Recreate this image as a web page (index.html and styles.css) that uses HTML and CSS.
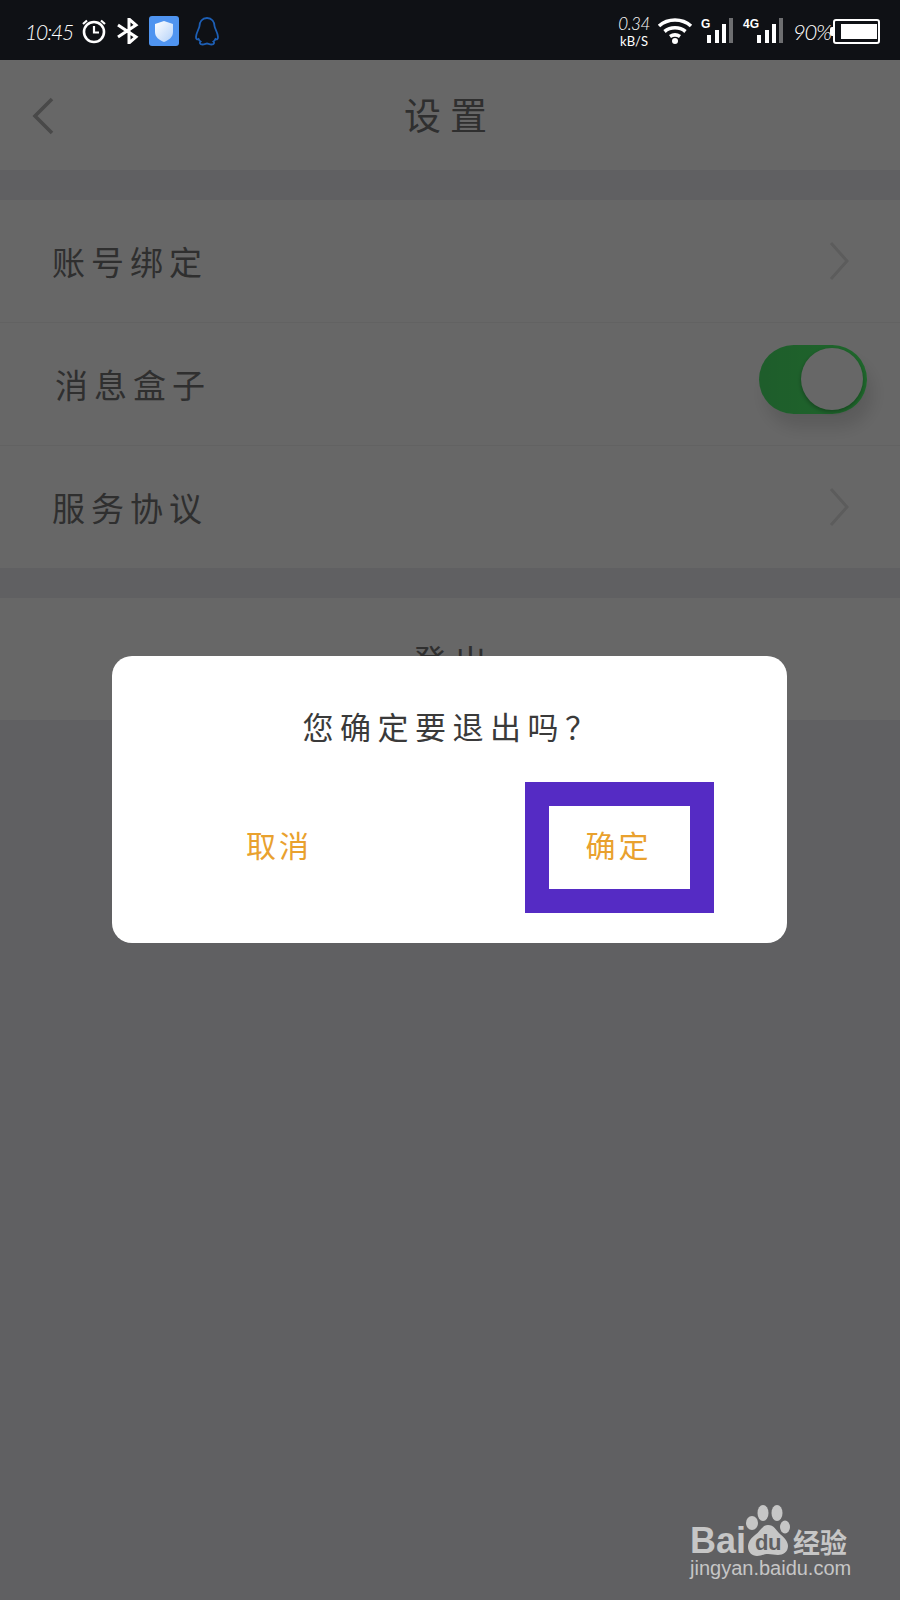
FILE: index.html
```html
<!DOCTYPE html>
<html lang="zh-CN">
<head>
<meta charset="utf-8">
<title>设置</title>
<link rel="stylesheet" href="styles.css">
</head>
<body>
<div class="phone">
  <div class="status">
    <div class="status-left">
      <span class="time">10:45</span>
      <svg class="ic-alarm" width="26" height="26" viewBox="0 0 26 26" fill="none" stroke="#fff" stroke-width="2.6"><circle cx="13" cy="14" r="10"/><path d="M13 8v6.500h5" stroke-width="2.200"/><path d="M2 6l4-3.500M24 6l-4-3.500" stroke-width="2.200"/></svg>
      <svg class="ic-bt" width="22" height="26" viewBox="0 0 22 26" fill="none" stroke="#fff" stroke-width="3"><path d="M1 7l18 12-7 6V1l7 6L1 19"/></svg>
      <svg class="ic-shield" width="30" height="30" viewBox="0 0 30 30"><defs><linearGradient id="sg" x1="0" y1="0" x2="1" y2="1"><stop offset="0" stop-color="#fff"/><stop offset="1" stop-color="#b4d2fa"/></linearGradient></defs><rect width="30" height="30" rx="3" fill="#4f94f0"/><path d="M15 5l9 3v8c0 5-4 8-9 10-5-2-9-5-9-10V8z" fill="url(#sg)"/></svg>
      <svg class="ic-qq" width="26" height="30" viewBox="0 0 26 30" fill="none" stroke="#1d5fb5" stroke-width="1.800"><path d="M13 2c-5 0-7.500 4-7.500 8 0 2-3.500 7-3.500 11 0 2 1 3 2.500 2 .5 1 1 2 2 2.500-1 1-1 3 2 3 2 0 3.500-1 4.500-1s2.500 1 4.500 1c3 0 3-2 2-3 1-.5 1.500-1.500 2-2.500 1.500 1 2.500 0 2.500-2 0-4-3.500-9-3.500-11 0-4-2.500-8-7.500-8z"/></svg>
    </div>
    <div class="status-right">
      <div class="speed"><span class="speed-num">0.34</span><span class="speed-unit">kB/S</span></div>
      <svg class="ic-wifi" width="36" height="26" viewBox="0 0 36 26" fill="none" stroke="#fff" stroke-width="3.600"><path d="M2 8c9-8 23-8 32 0M7.500 13.500c6-5 15-5 21 0M13 18.500c3-2 7-2 10 0"/><circle cx="18" cy="23" r="3" fill="#fff" stroke="none"/></svg>
      <div class="net">
        <span class="net-label">G</span>
        <svg width="32" height="26" viewBox="0 0 32 26"><rect x="6" y="17" width="4" height="8" fill="#fff"/><rect x="14" y="12" width="4" height="13" fill="#fff"/><rect x="21" y="6" width="4" height="19" fill="#fff"/><rect x="28" y="0" width="4" height="25" fill="#6d6e70"/></svg>
      </div>
      <div class="net net-4g">
        <span class="net-label">4G</span>
        <svg width="32" height="26" viewBox="0 0 32 26"><rect x="6" y="17" width="4" height="8" fill="#fff"/><rect x="14" y="12" width="4" height="13" fill="#fff"/><rect x="21" y="6" width="4" height="19" fill="#fff"/><rect x="28" y="0" width="4" height="25" fill="#6d6e70"/></svg>
      </div>
      <span class="pct">90%</span>
      <div class="battery"><i class="bat-cap"></i><div class="bat-body"><i class="bat-fill"></i></div></div>
    </div>
  </div>

  <div class="screen">
    <header class="head">
      <svg class="back" width="28" height="40" viewBox="0 0 28 40" fill="none" stroke="#b4b4b4" stroke-width="3.600"><path d="M23 3L6 20l17 17"/></svg>
      <h1 class="title">设置</h1>
    </header>
    <section class="group">
      <div class="row"><span class="label">账号绑定</span><svg class="chev" width="22" height="40" viewBox="0 0 22 40" fill="none" stroke="#e3e3e3" stroke-width="3"><path d="M3 2l16 18L3 38"/></svg></div>
      <div class="row"><span class="label label-2">消息盒子</span><div class="toggle"><i class="knob"></i></div></div>
      <div class="row"><span class="label">服务协议</span><svg class="chev" width="22" height="40" viewBox="0 0 22 40" fill="none" stroke="#e3e3e3" stroke-width="3"><path d="M3 2l16 18L3 38"/></svg></div>
    </section>
    <section class="group">
      <div class="row row-logout"><span class="label">登出</span></div>
    </section>
  </div>

  <div class="overlay">
    <div class="dialog">
      <p class="ask">您确定要退出吗？</p>
      <div class="actions">
        <button class="btn btn-cancel">取消</button>
        <div class="mark"><button class="btn btn-ok">确定</button></div>
      </div>
    </div>
  </div>

  <div class="logo">
    <div class="logo-top">
      <span class="bai">Bai</span>
      <div class="paw">
        <svg width="45" height="53" viewBox="0 0 45 53" fill="#c6c6c6"><ellipse cx="7" cy="20" rx="6" ry="7"/><ellipse cx="18" cy="10" rx="5.500" ry="8"/><ellipse cx="32" cy="10" rx="5.500" ry="8"/><ellipse cx="40" cy="24" rx="5" ry="6.500"/><path d="M23 22c6 0 8 5 12 9 5 4 8 8 8 12 0 6-5 9-10 9-4 0-6-1-10-1s-7 2-11 2c-5 0-9-4-9-9 0-5 3-9 7-12 5-3 7-10 13-10z"/></svg>
        <span class="du">du</span>
      </div>
      <span class="jy">经验</span>
    </div>
    <div class="url">jingyan.baidu.com</div>
  </div>
</div>
</body>
</html>
```
FILE: styles.css
```css
* { box-sizing: border-box; }
html, body { margin: 0; padding: 0; }
body { background: #5f5f61; font-family: "Noto Sans CJK SC", "Liberation Sans", sans-serif; }
.phone { position: relative; width: 900px; height: 1600px; overflow: hidden; }

.status { height: 60px; background: #0f1115; color: #fff; display: flex; justify-content: space-between; align-items: center; padding: 2px 20px 0 25px; position: relative; z-index: 3; }
.status-left, .status-right { display: flex; align-items: center; }
.time { font: italic 300 21px "Lato", sans-serif; letter-spacing: -1.1px; width: 56px; }
.ic-bt { margin-left: 10px; }
.ic-shield { margin-left: 10px; }
.ic-qq { margin-left: 15px; }
.speed { display: flex; flex-direction: column; align-items: center; width: 28px; font-family: "Lato", sans-serif; line-height: 1; }
.speed-num { font-size: 17px; font-style: italic; font-weight: 300; letter-spacing: -.5px; }
.speed-unit { font-size: 13px; margin-top: 3px; font-weight: 400; }
.ic-wifi { margin-left: 9px; }
.net { position: relative; margin-left: 8px; height: 26px; width: 32px; }
.net svg { display: block; }
.net-label { position: absolute; left: 0; top: 0; font: bold 12px/1 "Liberation Sans", sans-serif; }
.net-4g { margin-left: 18px; }
.net-4g .net-label { left: -8px; }
.pct { font: italic 300 22px "Lato", sans-serif; letter-spacing: -1.2px; margin-left: 10px; width: 37px; }
.battery { display: flex; align-items: center; }
.bat-cap { width: 3px; height: 9px; background: #fff; border-radius: 2px 0 0 2px; }
.bat-body { width: 47px; height: 25px; border: 2px solid #fff; border-radius: 3px; padding: 3px 1px 3px 6px; display: flex; }
.bat-fill { flex: 1; background: #fff; }

.screen { height: 1540px; background: #eeeef2; }
.head { position: relative; height: 110px; background: #fff; display: flex; align-items: center; justify-content: center; }
.back { position: absolute; left: 29px; top: 36px; }
.title { margin: 0 0 2px 0; font-size: 37px; font-weight: 400; letter-spacing: 9px; color: #747474; line-height: 1; }
.group { margin-top: 30px; background: #fff; }
.row { height: 123px; display: flex; align-items: center; justify-content: space-between; padding: 0 40px 0 52px; border-bottom: 1px solid #f2f2f2; }
.row:last-child { height: 122px; border-bottom: 0; }
.label { font-size: 33px; letter-spacing: 6px; color: #747474; line-height: 1; }
.label-2 { margin-left: 3px; }
.chev { margin-right: 10px; }
.toggle { position: relative; width: 108px; height: 69px; border-radius: 35px; background: linear-gradient(90deg, #4ce56b, #4dff6d); margin: 0 -7px 10px 0; box-shadow: 6px 14px 16px rgba(0,0,0,.12); }
.knob { position: absolute; right: 4px; top: 3px; width: 62px; height: 62px; border-radius: 50%; background: #fff; box-shadow: 0 2px 4px rgba(0,0,0,.3); }
.row-logout { justify-content: center; padding: 0; }
.row-logout .label { letter-spacing: 8px; margin-left: 8px; margin-top: 2px; }

.overlay { position: absolute; left: 0; top: 60px; right: 0; bottom: 0; background: rgba(0,0,0,.595); padding: 596px 113px 0 112px; z-index: 2; }
.dialog { height: 287px; background: #fff; border-radius: 20px; display: flex; flex-direction: column; }
.ask { margin: 48px 0 0 0; padding-left: 6px; text-align: center; font-size: 31px; letter-spacing: 6.500px; line-height: 44px; color: #3a3a3a; }
.actions { display: flex; margin-top: 34px; padding: 0 73px 0 0; justify-content: space-between; align-items: center; }
.btn { border: 0; background: #fff; padding: 0; font: 30px "Noto Sans CJK SC", sans-serif; letter-spacing: 3px; color: #e9a12e; margin-bottom: 8px; }
.btn-cancel { margin-left: 134px; }
.mark { width: 189px; height: 131px; border: 24px solid #552bc4; display: flex; align-items: center; justify-content: center; }
.btn-ok { margin-left: -2px; }

.logo { position: absolute; left: 690px; top: 1503px; width: 165px; z-index: 4; color: #c6c6c6; }
.logo-top { display: flex; align-items: flex-end; height: 53px; }
.bai { font: bold 36px/1 "Liberation Sans", sans-serif; margin-bottom: -3px; }
.paw { position: relative; width: 45px; height: 53px; margin-left: -1px; flex: none; }
.paw svg { display: block; }
.du { position: absolute; left: 10px; top: 29px; font: bold 22px/1 "Liberation Sans", sans-serif; color: #5f5f61; letter-spacing: -.5px; }
.jy { font-size: 27px; font-weight: 700; line-height: 1; margin: 0 0 1px 3px; white-space: nowrap; }
.url { margin-top: 1px; font: 20px/1.1 "Liberation Sans", sans-serif; white-space: nowrap; }
```
